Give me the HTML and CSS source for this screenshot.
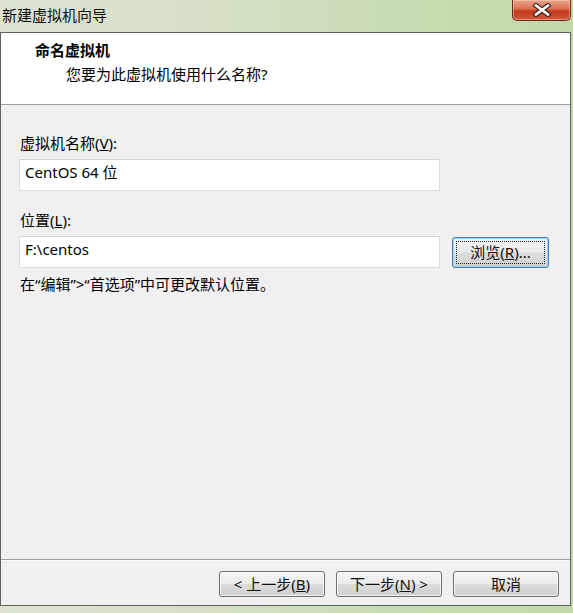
FILE: index.html
```html
<!DOCTYPE html>
<html lang="zh-CN">
<head>
<meta charset="utf-8">
<title>新建虚拟机向导</title>
<link rel="stylesheet" href="styles.css">
</head>
<body>
<div class="window">
  <div class="titlebar">
    <div class="title">新建虚拟机向导</div>
    <div class="close">
      <svg width="20" height="14" viewBox="-10 -7 20 14">
        <path d="M-6,-4.5 L6,4.5 M6,-4.5 L-6,4.5" stroke="#3a2a24" stroke-width="5" stroke-linecap="square" fill="none"/>
        <path d="M-6,-4.5 L6,4.5 M6,-4.5 L-6,4.5" stroke="#ffffff" stroke-width="2.6" stroke-linecap="square" fill="none"/>
      </svg>
    </div>
  </div>
  <div class="client">
    <div class="header">
      <div class="h-title">命名虚拟机</div>
      <div class="h-sub">您要为此虚拟机使用什么名称?</div>
    </div>
    <div class="content">
      <div class="label">虚拟机名称(<u>V</u>):</div>
      <div class="row">
        <div class="input">CentOS 64 位</div>
      </div>
      <div class="label label2">位置(<u>L</u>):</div>
      <div class="row">
        <div class="input">F:\centos</div>
        <div class="btn browse"><span class="focus">浏览(<u>R</u>)...</span></div>
      </div>
      <div class="hint">在“编辑”&gt;“首选项”中可更改默认位置。</div>
    </div>
    <div class="footer">
      <div class="btn">&lt; 上一步(<u>B</u>)</div>
      <div class="btn">下一步(<u>N</u>) &gt;</div>
      <div class="btn">取消</div>
    </div>
  </div>
</div>
</body>
</html>
```

FILE: styles.css
```css
html, body {
  margin: 0;
  padding: 0;
}
body {
  width: 573px;
  height: 613px;
  overflow: hidden;
  font-family: "Noto Sans", "Noto Sans CJK SC", sans-serif;
  font-size: 15px;
  color: #000;
}
.window {
  width: 573px;
  height: 613px;
  box-sizing: border-box;
  background: linear-gradient(90deg, #dde2d3 0%, #d6e0c8 35%, #cadcb4 65%, #c3d8a9 100%);
  display: flex;
  flex-direction: column;
}
.titlebar {
  height: 32px;
  display: flex;
  justify-content: space-between;
  align-items: flex-start;
}
.title {
  margin-left: 2px;
  margin-top: 5px;
  line-height: 20px;
  color: #111;
}
.close {
  width: 59px;
  height: 21px;
  margin-right: 2px;
  box-sizing: border-box;
  border: 1px solid #6e2a1c;
  border-top: none;
  border-radius: 0 0 5px 5px;
  background: linear-gradient(180deg, #eba48c 0%, #dc6e50 45%, #c4381c 55%, #d2583a 100%);
  display: flex;
  align-items: center;
  justify-content: center;
  box-shadow: inset 0 0 0 1px rgba(255, 220, 200, 0.45);
}
.client {
  width: 571px;
  height: 574px;
  box-sizing: border-box;
  border: 1px solid #5e625a;
  background: #f0f0f0;
  display: flex;
  flex-direction: column;
}
.header {
  height: 72px;
  box-sizing: border-box;
  background: #fff;
  border-bottom: 1px solid #a0a0a0;
  padding-top: 7px;
}
.h-title {
  font-weight: bold;
  line-height: 20px;
  padding-left: 34px;
}
.h-sub {
  line-height: 20px;
  margin-top: 4px;
  padding-left: 65px;
}
.content {
  flex: 1;
  padding: 28px 0 0 18px;
}
.label {
  line-height: 20px;
  margin-left: 1px;
}
.label2 {
  margin-top: 19px;
}
.row {
  display: flex;
  align-items: center;
  margin-top: 6px;
}
.input {
  width: 421px;
  height: 32px;
  box-sizing: border-box;
  background: #fff;
  border: 1px solid #dcdcdc;
  border-top-color: #d2d2d2;
  padding-left: 5px;
  line-height: 24px;
}
.btn {
  width: 106px;
  height: 26px;
  box-sizing: border-box;
  border: 1px solid #707070;
  border-radius: 3px;
  background: linear-gradient(180deg, #f4f4f4 0%, #ececec 48%, #dcdcdc 52%, #cfcfcf 100%);
  box-shadow: inset 0 0 0 1px rgba(255, 255, 255, 0.7);
  display: flex;
  align-items: center;
  justify-content: center;
  line-height: 20px;
  color: #111;
}
.browse {
  width: 97px;
  height: 31px;
  margin-left: 12px;
  border-color: #3c7fb1;
  box-shadow: inset 0 0 0 1px #a6d8f0;
  background: linear-gradient(180deg, #f2f2f2 0%, #ebebeb 48%, #dddddd 52%, #d0d0d0 100%);
  padding: 3px;
}
.focus {
  display: flex;
  align-items: center;
  justify-content: center;
  width: 100%;
  height: 100%;
  box-sizing: border-box;
  border: 1px dotted #222;
}
.hint {
  line-height: 20px;
  margin-top: 6px;
  margin-left: 1px;
}
.footer {
  height: 46px;
  box-sizing: border-box;
  border-top: 1px solid #a0a0a0;
  box-shadow: inset 0 1px 0 #fdfdfd;
  padding: 11px 11px 0 0;
  display: flex;
  justify-content: flex-end;
  align-items: flex-start;
  gap: 11px;
}
```
